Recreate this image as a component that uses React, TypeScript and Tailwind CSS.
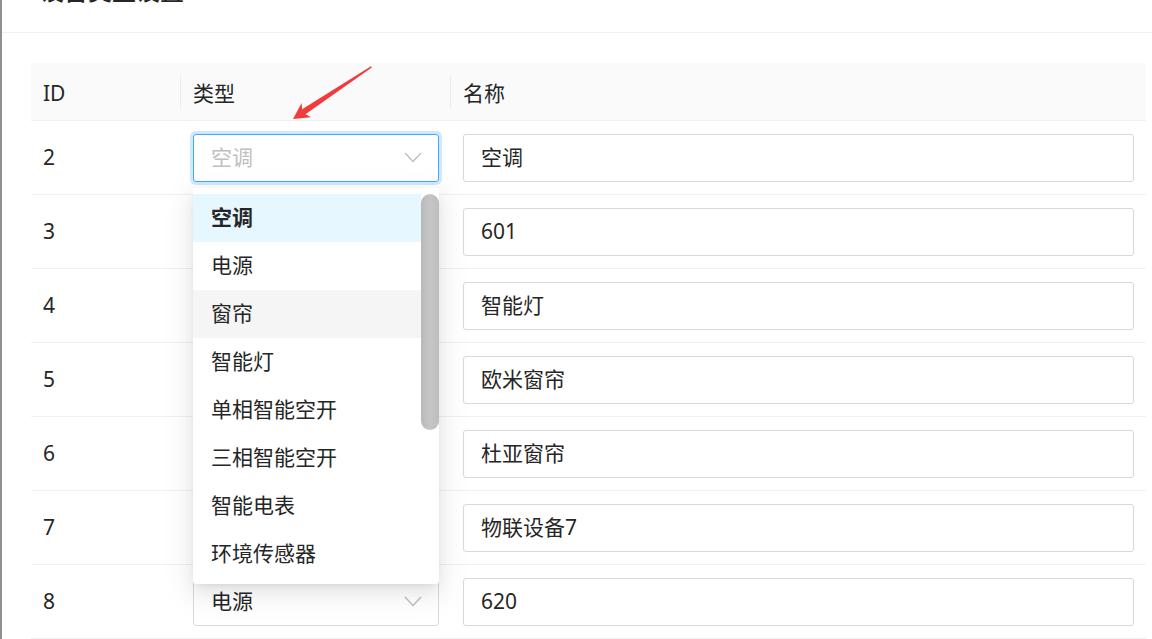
import { useState } from "react";

const rows = [
  { id: 2, type: "空调", name: "空调", open: true },
  { id: 3, type: "电源", name: "601" },
  { id: 4, type: "窗帘", name: "智能灯" },
  { id: 5, type: "窗帘", name: "欧米窗帘" },
  { id: 6, type: "窗帘", name: "杜亚窗帘" },
  { id: 7, type: "电源", name: "物联设备7" },
  { id: 8, type: "电源", name: "620" },
];

const typeOptions = ["空调", "电源", "窗帘", "智能灯", "单相智能空开", "三相智能空开", "智能电表", "环境传感器"];

function Chevron() {
  return (
    <svg width="18" height="11" viewBox="0 0 18 11" className="shrink-0">
      <polyline points="1,1 9,9.5 17,1" fill="none" stroke="#bfbfbf" strokeWidth="1.4" />
    </svg>
  );
}

function TypeDropdown({ selected }: { selected: string }) {
  const [hovered] = useState("窗帘");
  return (
    <div className="absolute left-0 top-[54px] z-10 flex h-[396px] w-full overflow-hidden rounded-[3px] bg-white py-[6px] shadow-[0_3px_6px_-4px_rgba(0,0,0,0.12),0_6px_16px_0_rgba(0,0,0,0.08),0_9px_28px_8px_rgba(0,0,0,0.05)]">
      <ul className="flex-1">
        {typeOptions.map((opt) => (
          <li
            key={opt}
            className={
              "flex h-[48px] items-center pl-[18px] " +
              (opt === selected
                ? "bg-[#e6f7ff] font-semibold"
                : opt === hovered
                  ? "bg-[#f5f5f5]"
                  : "")
            }
          >
            {opt}
          </li>
        ))}
      </ul>
      {/* scrollbar track + thumb */}
      <div className="w-[18px]">
        <div className="h-[236px] rounded-full bg-gradient-to-r from-[#b9b9b9] via-[#c6c6c6] to-[#bdbdbd]" />
      </div>
    </div>
  );
}

function TypeSelect({ value, open, hidden }: { value: string; open?: boolean; hidden?: boolean }) {
  return (
    <div className="relative">
      <div
        className={
          "flex h-[48px] items-center justify-between rounded-[3px] border pl-[17px] pr-[16px] " +
          (open
            ? "border-[#40a9ff] shadow-[0_0_0_3px_rgba(24,144,255,0.2)]"
            : "border-[#d9d9d9]")
        }
      >
        {/* value stays out of the page text while the list covers it */}
        {!hidden && <span className={open ? "text-[#bfbfbf]" : ""}>{value}</span>}
        <Chevron />
      </div>
      {open && <TypeDropdown selected={value} />}
    </div>
  );
}

function ArrowMark() {
  return (
    <svg className="pointer-events-none absolute left-0 top-0 z-20" width="400" height="140" viewBox="0 0 400 140">
      <polygon
        points="371,66.3 302.1,109.3 301.6,103 293,119 311,117.2 305.5,114.3 371.8,67.6"
        fill="#f03c3c"
      />
    </svg>
  );
}

export default function App() {
  return (
    <div className="relative flex h-[639px] w-[1152px] overflow-hidden bg-white font-['Noto_Sans','Noto_Sans_CJK_SC',sans-serif] text-[21px] text-[#262626]">
      <div className="w-[2px] bg-[#8f8f8f]" />

      <div className="flex-1">
        {/* modal header, scrolled mostly out of view */}
        <div className="h-[33px] overflow-hidden border-b border-[#f0f0f0] pl-[38px]">
          <div className="-mt-[26px] text-[24px] leading-[33px] font-medium">设备类型设置</div>
        </div>

        <div className="pl-[29px] pr-[6px] pt-[30px]">
          <div className="w-[1115px]">
            {/* table head */}
            <div className="grid h-[58px] grid-cols-[149px_270px_1fr] border-b border-[#f0f0f0] bg-[#fafafa]">
              <div className="flex items-center pl-[12px] pt-[4px]">ID</div>
              <div className="flex items-center">
                <span className="h-[34px] w-px bg-[#ececec]" />
                <span className="ml-[12px] pt-[4px]">类型</span>
              </div>
              <div className="flex items-center">
                <span className="h-[34px] w-px bg-[#ececec]" />
                <span className="ml-[12px] pt-[4px]">名称</span>
              </div>
            </div>

            {/* table body */}
            {rows.map((r, i) => (
              <div
                key={r.id}
                className="grid h-[74px] grid-cols-[149px_270px_1fr] items-center border-b border-[#f0f0f0]"
              >
                <div className="pl-[12px]">{r.id}</div>
                <div className="pl-[13px] pr-[11px]">
                  <TypeSelect value={r.type} open={r.open} hidden={i > 0 && i < rows.length - 1} />
                </div>
                <div className="pl-[13px] pr-[12px]">
                  <div className="flex h-[48px] items-center rounded-[3px] border border-[#d9d9d9] pl-[17px]">
                    {r.name}
                  </div>
                </div>
              </div>
            ))}
          </div>
        </div>
      </div>

      <ArrowMark />
    </div>
  );
}
